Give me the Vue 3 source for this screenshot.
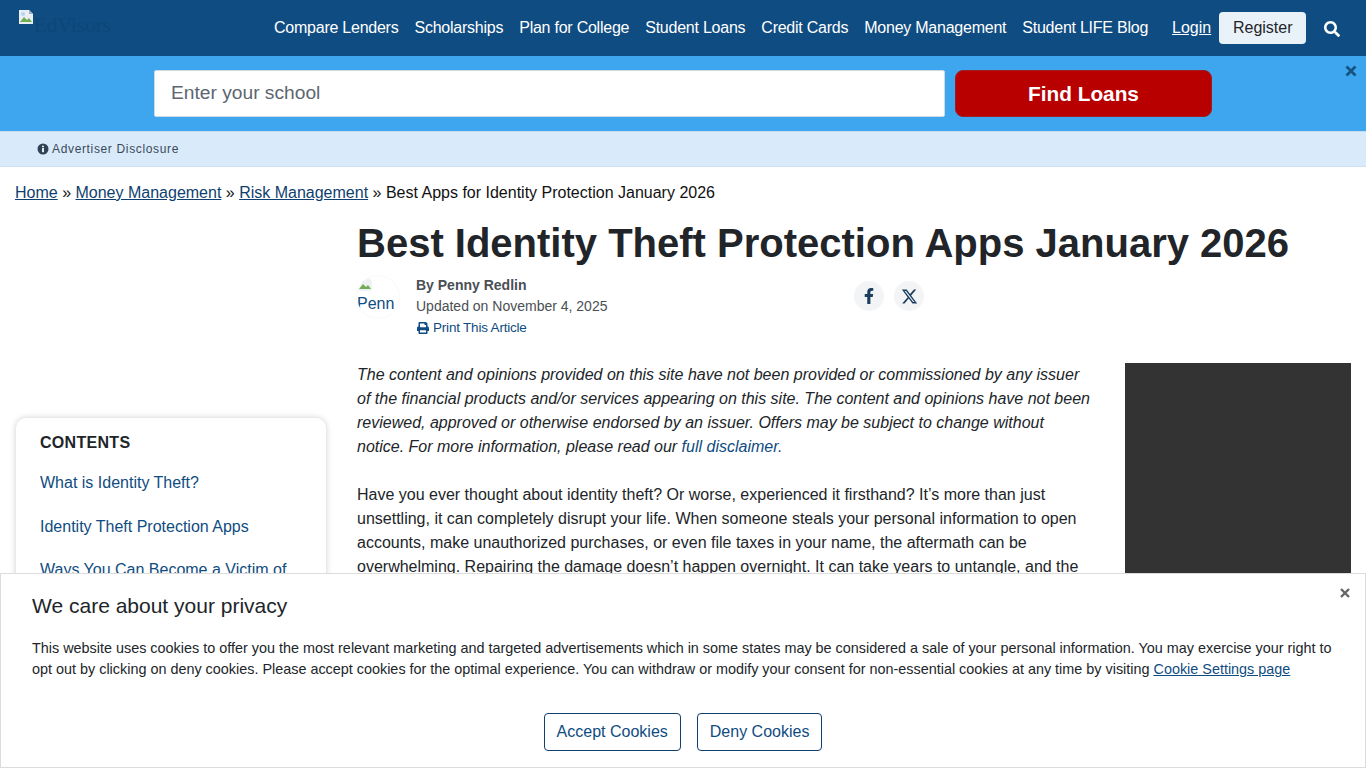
<script setup>
const navLinks = [
  'Compare Lenders',
  'Scholarships',
  'Plan for College',
  'Student Loans',
  'Credit Cards',
  'Money Management',
  'Student LIFE Blog',
]
const tocLinks = ['What is Identity Theft?', 'Identity Theft Protection Apps', 'Ways You Can Become a Victim of Identity Theft']
</script>

<template>
  <div class="page">
    <header class="topbar">
      <a class="logo">
        <svg class="broken" viewBox="0 0 16 16" width="16" height="16">
          <path d="M1 1h10l4 4v10H1z" fill="#e8eef4" />
          <path d="M2 13l4-5 3 3 2-2 3 4z" fill="#6fae52" />
          <circle cx="5" cy="5" r="2" fill="#b9d3ee" />
          <path d="M11 1v4h4z" fill="#9fb2c4" />
        </svg>
        <span class="logo-alt">EdVisors</span>
      </a>
      <nav class="nav">
        <a v-for="link in navLinks" :key="link">{{ link }}</a>
      </nav>
      <a class="login">Login</a>
      <button class="register">Register</button>
      <svg class="search" viewBox="0 0 512 512" width="16" height="16">
        <path fill="#fff" d="M505 442.700L405.300 343c-4.500-4.500-10.600-7-17-7H372c27.600-35.300 44-79.700 44-128C416 93.100 322.900 0 208 0S0 93.100 0 208s93.100 208 208 208c48.300 0 92.700-16.400 128-44v16.300c0 6.400 2.500 12.500 7 17l99.700 99.700c9.400 9.400 24.600 9.400 33.900 0l28.300-28.300c9.400-9.400 9.400-24.600.1-34zM208 336c-70.700 0-128-57.200-128-128 0-70.700 57.200-128 128-128 70.700 0 128 57.200 128 128 0 70.700-57.200 128-128 128z" />
      </svg>
    </header>

    <section class="finder">
      <input class="school" placeholder="Enter your school" />
      <button class="find">Find Loans</button>
      <svg class="finder-close" viewBox="0 0 12 12" width="12" height="12">
        <path d="M1.500 1.500l9 9M10.500 1.500l-9 9" stroke="#17537f" stroke-width="2.800" />
      </svg>
    </section>

    <div class="disclosure">
      <svg viewBox="0 0 12 12" width="12" height="12">
        <circle cx="6" cy="6" r="5.500" fill="#2f4256" />
        <rect x="5.100" y="5" width="1.800" height="4.200" fill="#fff" />
        <rect x="5.100" y="2.700" width="1.800" height="1.500" fill="#fff" />
      </svg>
      <span>Advertiser Disclosure</span>
    </div>

    <div class="crumbs">
      <a>Home</a> » <a>Money Management</a> » <a>Risk Management</a> » Best Apps for Identity Protection January 2026
    </div>

    <div class="columns">
      <aside class="side">
        <div class="toc">
          <div class="toc-title">CONTENTS</div>
          <a v-for="link in tocLinks" :key="link" class="toc-link">{{ link }}</a>
        </div>
      </aside>

      <main class="main">
        <h1>Best Identity Theft Protection Apps January 2026</h1>

        <div class="meta">
          <div class="avatar">
            <svg viewBox="0 0 16 16" width="16" height="16">
              <path d="M1 1h10l4 4v10H1z" fill="#eef2f5" />
              <path d="M2 13l4-5 3 3 2-2 3 4z" fill="#6fae52" />
              <circle cx="5" cy="5" r="2" fill="#b9d3ee" />
            </svg>
            <span>Penn</span>
          </div>
          <div class="byline">
            <div class="author">By Penny Redlin</div>
            <div class="updated">Updated on November 4, 2025</div>
            <a class="print">
              <svg viewBox="0 0 512 512" width="12" height="12">
                <path fill="#0f4c81" d="M448 192V77.250c0-8.490-3.370-16.620-9.370-22.630L393.370 9.370c-6-6-14.140-9.370-22.630-9.370H96C78.330 0 64 14.330 64 32v160c-35.350 0-64 28.650-64 64v112c0 8.840 7.160 16 16 16h48v96c0 17.670 14.330 32 32 32h320c17.670 0 32-14.330 32-32v-96h48c8.840 0 16-7.160 16-16V256c0-35.350-28.650-64-64-64zm-64 256H128v-96h256v96zm0-224H128V64h192v48c0 8.840 7.160 16 16 16h48v96z" />
              </svg>
              Print This Article
            </a>
          </div>
          <div class="share">
            <span class="share-btn">
              <svg viewBox="0 0 320 512" width="10" height="16">
                <path fill="#1c3f5e" d="M279.140 288l14.220-92.660h-88.910v-60.130c0-25.350 12.420-50.060 52.240-50.060h40.420V6.260S260.430 0 225.360 0c-73.220 0-121.080 44.380-121.080 124.720v70.620H22.890V288h81.390v224h100.170V288z" />
              </svg>
            </span>
            <span class="share-btn">
              <svg viewBox="0 0 512 512" width="17" height="17">
                <path fill="#1c3f5e" d="M389.200 48h70.600L305.600 224.200 487 464H345L233.700 318.600 106.500 464H35.800l164.900-188.500L26.800 48h145.600l100.500 132.900L389.200 48zm-24.800 373.800h39.100L151.100 88h-42l255.300 333.800z" />
              </svg>
            </span>
          </div>
        </div>

        <div class="body">
          <div class="copy">
            <p class="disclaimer">The content and opinions provided on this site have not been provided or commissioned by any issuer of the financial products and/or services appearing on this site. The content and opinions have not been reviewed, approved or otherwise endorsed by an issuer. Offers may be subject to change without notice. For more information, please read our <a>full disclaimer.</a></p>
            <p>Have you ever thought about identity theft? Or worse, experienced it firsthand? It’s more than just unsettling, it can completely disrupt your life. When someone steals your personal information to open accounts, make unauthorized purchases, or even file taxes in your name, the aftermath can be overwhelming. Repairing the damage doesn’t happen overnight. It can take years to untangle, and the</p>
          </div>
          <div class="ad"></div>
        </div>
      </main>
    </div>

    <div class="cookie">
      <svg class="cookie-close" viewBox="0 0 12 12" width="12" height="12">
        <path d="M2 2l8 8M10 2l-8 8" stroke="#666" stroke-width="2.400" />
      </svg>
      <h2>We care about your privacy</h2>
      <p>This website uses cookies to offer you the most relevant marketing and targeted advertisements which in some states may be considered a sale of your personal information. You may exercise your right to opt out by clicking on deny cookies. Please accept cookies for the optimal experience. You can withdraw or modify your consent for non-essential cookies at any time by visiting <a>Cookie Settings page</a></p>
      <div class="cookie-actions">
        <button>Accept Cookies</button>
        <button>Deny Cookies</button>
      </div>
    </div>
  </div>
</template>

<style>
html, body { margin: 0; overflow: hidden; }
</style>

<style scoped>
.page { height: 768px; overflow: hidden; font-family: "Liberation Sans", Arial, sans-serif; color: #212529; background: #fff; }

.topbar { height: 56px; background: #0f4c81; display: flex; align-items: center; padding: 0 24px 1px 18px; box-sizing: border-box; }
.logo { display: flex; align-items: flex-start; width: 256px; height: 30px; flex-shrink: 0; }
.broken { margin-top: -4px; flex-shrink: 0; }
.logo-alt { font-family: "Liberation Serif", serif; font-size: 21px; line-height: 22px; color: #0d4677; margin-top: 1px; }
.nav { display: flex; gap: 16px; }
.nav a { color: #fff; font-size: 16px; letter-spacing: -0.24px; white-space: nowrap; }
.login { color: #fff; font-size: 16px; text-decoration: underline; margin-left: 24px; }
.register { width: 87px; height: 32px; margin-left: 8px; border: 0; border-radius: 4px; background: #e9f1f9; color: #212529; font: 16px "Liberation Sans", Arial, sans-serif; }
.search { margin-left: 18px; margin-top: 3px; }

.finder { position: relative; height: 75px; background: #3ea6ee; display: flex; align-items: center; padding: 0 0 1px 154px; box-sizing: border-box; gap: 10px; }
.school { width: 791px; height: 47px; box-sizing: border-box; border: 1px solid #cdd9e3; border-radius: 2px; padding: 0 16px; font: 19.200px "Liberation Sans", Arial, sans-serif; background: #fff; }
.school::placeholder { color: #5c6670; opacity: 1; }
.find { width: 257px; height: 47px; padding-top: 2px; border: 1px solid #a11b22; border-radius: 8px; background: #b80000; color: #fff; font: bold 20.800px "Liberation Sans", Arial, sans-serif; }
.finder-close { position: absolute; top: 9px; right: 9px; }

.disclosure { height: 36px; box-sizing: border-box; background: #d9eafa; border-top: 1px solid #c6dcea; border-bottom: 1px solid #cfe0ee; display: flex; align-items: center; gap: 3px; padding-left: 37px; font-size: 12px; letter-spacing: 0.65px; color: #3a4a5a; }

.crumbs { padding: 16px 15px 0; font-size: 16px; line-height: 20px; color: #111; }
.crumbs a { color: #0f3f6e; text-decoration: underline; }

.columns { display: flex; margin-top: 17px; }
.side { width: 357px; flex-shrink: 0; padding: 198px 0 0 16px; box-sizing: border-box; }
.toc { width: 310px; box-sizing: border-box; padding: 16px 24px; border-radius: 10px; background: #fff; box-shadow: 0 0 6px rgba(0, 0, 0, 0.2); }
.toc-title { font-size: 16px; font-weight: bold; letter-spacing: 0.3px; line-height: 18px; margin-bottom: 21px; color: #212529; }
.toc-link { display: block; color: #0f4c81; font-size: 16px; line-height: 20px; margin-bottom: 24px; }
.toc-link:nth-of-type(2) { margin-bottom: 23px; }

.main { flex: 1; min-width: 0; padding-right: 15px; }
h1 { margin: 0; font-size: 40px; line-height: 46px; font-weight: bold; white-space: nowrap; color: #212529; }

.meta { display: flex; margin-top: 9px; height: 88px; }
.avatar { width: 42px; height: 42px; margin-top: 1px; border-radius: 50%; overflow: hidden; color: #0f4c81; font-size: 16px; line-height: 14px; box-shadow: 0 0 2px rgba(0, 0, 0, 0.08); flex-shrink: 0; }
.avatar svg { display: block; margin-bottom: 5px; }
.byline { margin-left: 17px; width: 437px; font-size: 14px; line-height: 21px; color: #4a4f54; }
.author { font-weight: bold; }
.print { color: #0f4c81; display: flex; align-items: center; gap: 4px; margin-left: 1px; font-size: 13.500px; letter-spacing: -0.2px; }
.share { display: flex; gap: 10px; margin: 6px 0 0 1px; }
.share-btn { width: 30px; height: 30px; border-radius: 50%; background: #f2f4f6; display: flex; align-items: center; justify-content: center; }

.body { display: flex; justify-content: space-between; }
.copy { width: 736px; font-size: 16px; line-height: 24px; color: #212529; }
.copy p { margin: 0 0 24px; }
.disclaimer { font-style: italic; }
.disclaimer a { color: #0f4c81; }
.ad { width: 226px; height: 300px; background: #333; }

.cookie { position: fixed; left: 0; right: 0; bottom: 0; height: 195px; box-sizing: border-box; padding: 20px 31px 0; background: #fff; border: 1px solid #dcdcdc; }
.cookie h2 { margin: 0; font-size: 21px; font-weight: normal; line-height: 24px; color: #212529; }
.cookie p { margin: 20px 0 0; font-size: 14.400px; line-height: 21px; color: #212529; }
.cookie p a { color: #0f4c81; text-decoration: underline; }
.cookie-close { position: absolute; top: 13px; right: 14px; }
.cookie-actions { display: flex; justify-content: center; gap: 16px; margin-top: 33px; }
.cookie-actions button { height: 38px; padding: 0 12px; border: 1px solid #0f3f6e; border-radius: 4px; background: #fff; color: #0f4c81; font: 16px "Liberation Sans", Arial, sans-serif; }
</style>
